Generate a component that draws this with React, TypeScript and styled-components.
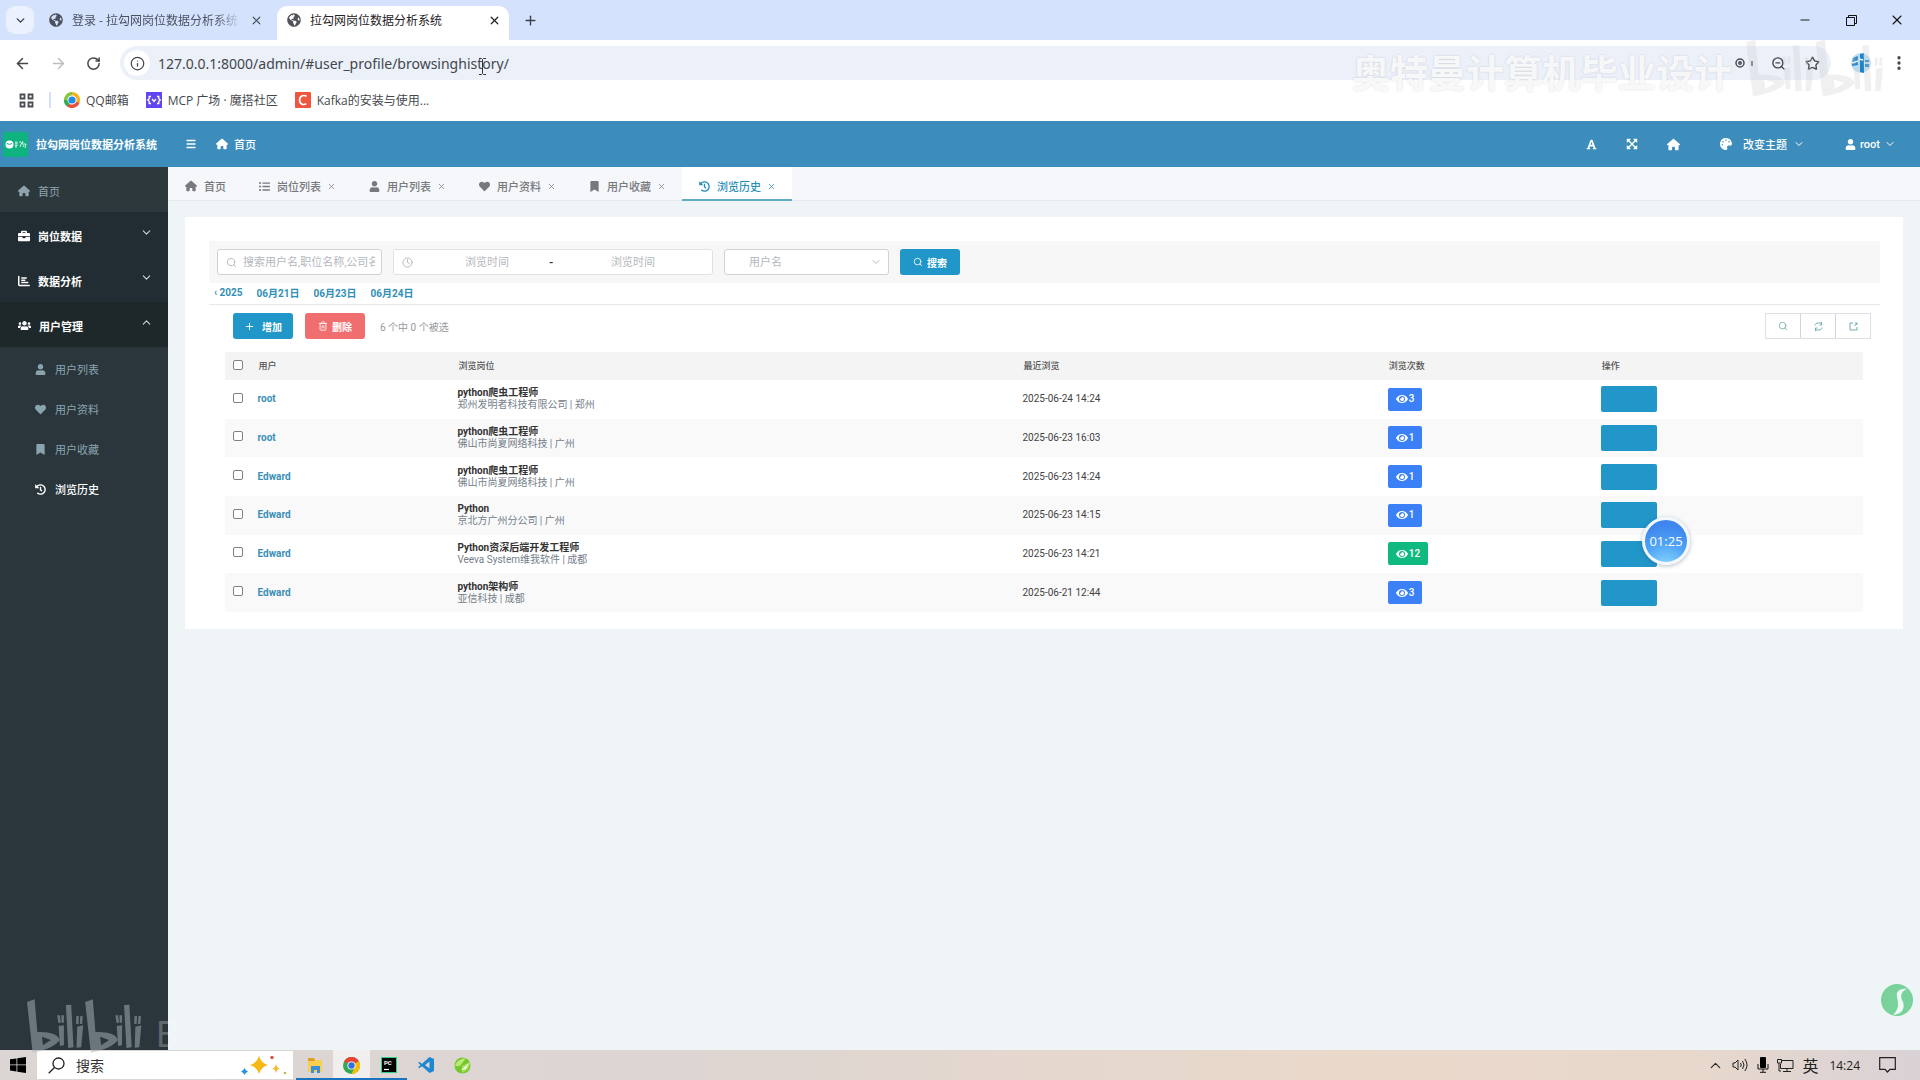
import React from 'react';
import styled, { createGlobalStyle } from 'styled-components';
import {
  FaBookmark, FaBriefcase, FaEye, FaExpandArrowsAlt, FaFont, FaGlobeAmericas,
  FaHeart, FaHistory, FaListUl, FaPalette, FaUser, FaUsers,
} from 'react-icons/fa';
import { FaChartBar, FaHouse } from 'react-icons/fa6';
import {
  ArrowLeft, ArrowRight, ChevronDown, ChevronUp, Clock, Info, Menu, Minus, MoreVertical,
  Plus, RotateCw, Search, Star, Trash2, X, ZoomOut,
} from 'lucide-react';

const Global = createGlobalStyle`
  *, *::before, *::after { box-sizing: border-box; }
  body { margin: 0; overflow: hidden; }
  button, input, select { font: inherit; color: inherit; margin: 0; }
  button { border: 0; padding: 0; background: none; display: inline-flex; align-items: center; justify-content: center; }
  a { color: inherit; text-decoration: none; }
  svg { flex: none; }
`;

const uiFont = '"Open Sans", "Noto Sans CJK SC", sans-serif';
const appFont = 'Roboto, "Noto Sans CJK SC", sans-serif';

const Screen = styled.div`
  position: relative;
  display: flex;
  flex-direction: column;
  height: 100vh;
  background: #eff4f6;
  font-family: ${appFont};
  font-size: 11px;
`;

/* ---------- browser window ---------- */
const TabStrip = styled.header`
  display: flex;
  align-items: flex-end;
  height: 40px;
  padding: 0 0 0 6px;
  background: #d5e2fe;
  color: #3c4249;
  font: 12px ${uiFont};
`;
const TabSearch = styled.button`
  width: 28px;
  height: 28px;
  margin-bottom: 6px;
  border-radius: 9px;
  background: #ebf1ff;
`;
const BrowserTab = styled.div<{ $active?: boolean }>`
  display: flex;
  align-items: center;
  gap: 9px;
  width: ${p => (p.$active ? 232 : 243)}px;
  height: 34px;
  padding: ${p => (p.$active ? '0 8px 6px 10px' : '0 14px 6px 15px')};
  border-radius: 10px 10px 0 0;
  background: ${p => (p.$active ? '#fff' : 'transparent')};
  color: ${p => (p.$active ? '#1f2226' : '#4a5260')};
`;
const BrowserTitle = styled.span<{ $fade?: boolean }>`
  flex: 1;
  overflow: hidden;
  white-space: nowrap;
  mask-image: ${p => (p.$fade ? 'linear-gradient(90deg, #000 85%, transparent)' : 'none')};
`;
const NewTab = styled.button`
  width: 28px;
  height: 28px;
  margin: 0 0 6px 7px;
`;
const WindowControls = styled.div`
  display: flex;
  align-self: stretch;
  margin-left: auto;
  color: #111;
  button { width: 46px; height: 40px; }
`;
const Toolbar = styled.div`
  display: flex;
  align-items: center;
  height: 46px;
  padding: 0 12px 0 14px;
  gap: 19px;
  background: #fff;
  color: #44484d;
`;
const AddressBar = styled.label`
  display: flex;
  align-items: center;
  flex: 1;
  height: 34px;
  padding: 0 6px 0 4px;
  margin-right: 1px;
  gap: 8px;
  border-radius: 17px;
  background: #ebf0f9;
  input {
    flex: 1;
    min-width: 0;
    padding: 0;
    border: 0;
    outline: 0;
    background: none;
    font: 14px "Noto Sans", sans-serif;
    color: #43474d;
  }
  button { width: 26px; }
`;
const InfoBubble = styled.span`
  display: flex;
  align-items: center;
  justify-content: center;
  width: 26px;
  height: 26px;
  border-radius: 50%;
  background: #fff;
`;
const Bookmarks = styled.nav`
  display: flex;
  align-items: center;
  height: 35px;
  padding: 0 0 7px 19px;
  gap: 17px;
  background: #fff;
  color: #45494e;
  font: 12px ${uiFont};
  a { display: flex; align-items: center; gap: 6px; }
`;
const Divider = styled.i`
  width: 2px;
  height: 16px;
  margin-left: -2px;
  margin-right: -4px;
  background: #d3e0fb;
`;

/* ---------- admin header ---------- */
const AdminHeader = styled.header`
  display: flex;
  align-items: center;
  height: 46px;
  background: #3c8dbc;
  color: #fff;
  font-weight: 500;
`;
const Brand = styled.a`
  display: flex;
  align-items: center;
  gap: 8px;
  width: 168px;
  padding-left: 3px;
  font-weight: 700;
`;
const HeaderLeft = styled.div`
  display: flex;
  align-items: center;
  gap: 19px;
  padding-left: 17px;
  a { display: flex; align-items: center; gap: 6px; }
`;
const HeaderRight = styled.div`
  display: flex;
  align-items: center;
  margin-left: auto;
  padding-right: 24px;
  gap: 40px;
`;
const HeaderIcons = styled.div`
  display: flex;
  gap: 29px;
`;
const HeaderButton = styled.button`
  gap: 4px;
`;
const ThemeLabel = styled.span`
  margin: 0 2px 0 7px;
`;

/* ---------- body ---------- */
const Body = styled.div`
  display: flex;
  flex: 1;
  min-height: 0;
`;
const Sidebar = styled.nav`
  width: 168px;
  background: #2a363c;
`;
const tones = { home: '#2d383d', group: '#222d33', open: '#1e282b' };
const MenuItem = styled.button<{ $tone: keyof typeof tones }>`
  display: flex;
  justify-content: flex-start;
  gap: 8px;
  width: 100%;
  height: 45px;
  padding: 2px 15px 0 18px;
  background: ${p => tones[p.$tone]};
  color: ${p => (p.$tone === 'home' ? '#8fa5ad' : '#fff')};
  font-weight: ${p => (p.$tone === 'home' ? 400 : 700)};
  svg:nth-of-type(2) { margin-left: auto; margin-bottom: 6px; color: #cfd6d9; }
`;
const SubMenu = styled.ul`
  margin: 0;
  padding: 2px 0 0;
  list-style: none;
`;
const SubLink = styled.a<{ $active?: boolean }>`
  display: flex;
  align-items: center;
  gap: 9px;
  height: 40px;
  padding-left: 35px;
  color: ${p => (p.$active ? '#fff' : '#8aa4af')};
  font-weight: ${p => (p.$active ? 500 : 400)};
`;
const Content = styled.main`
  flex: 1;
  min-width: 0;
`;
const PageTabs = styled.div`
  display: flex;
  height: 34px;
  background: #f5f7fa;
  border-bottom: 1px solid #e6eaee;
  color: #77797d;
`;
const PageTab = styled.div<{ $active?: boolean }>`
  display: flex;
  align-items: center;
  gap: 6px;
  height: 34px;
  padding: 4px 16px 0 17px;
  font-weight: 500;
  background: ${p => (p.$active ? '#fff' : 'transparent')};
  color: ${p => (p.$active ? '#2a8fb8' : 'inherit')};
  box-shadow: ${p => (p.$active ? 'inset 0 -2px #62abc4' : 'none')};
  button { gap: 7px; }
`;
const Card = styled.section`
  margin: 16px 17px 0;
  padding: 24px 23px 17px 24px;
  background: #fff;
`;
const Filters = styled.form`
  display: flex;
  align-items: center;
  gap: 11px;
  height: 42px;
  padding: 0 8px;
  background: #f7f7f7;
  color: #b4b7bd;
`;
const Field = styled.label<{ $width: number; $indent?: number }>`
  display: flex;
  align-items: center;
  gap: 6px;
  width: ${p => p.$width}px;
  height: 26px;
  padding: 0 6px 0 ${p => p.$indent ?? 8}px;
  border: 1px solid #cfd2d6;
  border-radius: 3px;
  background: #fff;
  input, select {
    flex: 1;
    min-width: 0;
    padding: 0;
    border: 0;
    outline: 0;
    background: none;
    appearance: none;
  }
  input::placeholder { color: #b4b7bd; opacity: 1; }
`;
const DateRange = styled(Field)`
  gap: 0;
  border-color: #dfe2e6;
  svg { margin-right: 12px; }
  input { flex: 0 1 124px; text-align: center; }
  b { width: 22px; color: #333; }
`;
const colors = { primary: '#2196c8', danger: '#f06e6e' };
const Button = styled.button<{ $tone: keyof typeof colors; $gap: number }>`
  gap: ${p => p.$gap}px;
  min-width: 60px;
  height: 26px;
  border-radius: 3px;
  background: ${p => colors[p.$tone]};
  color: #fff;
  font-size: 10px;
  font-weight: 700;
`;
const DateNav = styled.nav`
  display: flex;
  align-items: center;
  gap: 14px;
  height: 22px;
  padding: 0 0 3px 5px;
  border-bottom: 1px solid #e8e8e8;
  color: #2f8fb5;
  font-size: 10px;
  font-weight: 700;
`;
const Actions = styled.div`
  display: flex;
  align-items: center;
  height: 47px;
  padding: 0 9px 5px 24px;
  gap: 12px;
  color: #96999d;
  font-size: 10px;
`;
const Summary = styled.span`
  margin-left: 3px;
`;
const ToolGroup = styled.div`
  display: flex;
  margin-left: auto;
  border: 1px solid #dcdfe6;
  color: #74adaf;
  button { width: 34px; height: 24px; }
  button + button { width: 35px; border-left: 1px solid #cfd6da; }
`;
const TableWrap = styled.div`
  padding: 0 17px 0 16px;
`;
const Table = styled.table`
  width: 100%;
  height: 260px;
  border-collapse: collapse;
  table-layout: fixed;
  font-size: 10px;
  line-height: 12px;
  color: #3f4245;
  th, td { padding: 0 0 0 8px; text-align: left; }
  thead tr { height: 28px; background: #f4f4f4; }
  th { padding-left: 9px; font-size: 9px; font-weight: 500; color: #555; }
  th:first-child, td:first-child { padding-left: 8px; }
  tbody tr:nth-child(even) { background: #f9f9f9; }
  input {
    display: block;
    appearance: none;
    width: 10px;
    height: 10px;
    margin: 0 0 3px;
    border: 1px solid #808080;
    border-radius: 2px;
    background: #fff;
  }
`;
const UserLink = styled.a`
  color: #3a8fb7;
  font-weight: 700;
`;
const Job = styled.strong`
  display: block;
  color: #333;
`;
const Company = styled.span`
  display: block;
  color: #75808a;
`;
const Badge = styled.span<{ $hot: boolean }>`
  display: inline-flex;
  align-items: center;
  gap: 1px;
  height: 23px;
  padding: 0 8px;
  border-radius: 2px;
  background: ${p => (p.$hot ? '#10b97f' : '#3b80f6')};
  color: #fff;
  font-weight: 500;
  vertical-align: middle;
`;
const RowAction = styled.button`
  width: 56px;
  height: 26px;
  border-radius: 2px;
  background: ${colors.primary};
  vertical-align: middle;
`;

/* ---------- taskbar ---------- */
const Taskbar = styled.footer`
  display: flex;
  align-items: stretch;
  height: 30px;
  background: linear-gradient(90deg, #dbd6d4 0%, #ddd5d2 35%, #ead9cb 70%, #e8d8cc 88%, #d9d2d6 100%);
  color: #222;
  font: 12px ${uiFont};
`;
const StartButton = styled.button`
  width: 37px;
  padding-right: 2px;
`;
const TaskSearch = styled.label`
  display: flex;
  align-items: center;
  gap: 11px;
  width: 256px;
  margin: 1px 3px 1px 0;
  padding: 0 6px 0 11px;
  background: #fff;
  input {
    flex: 1;
    min-width: 0;
    border: 0;
    padding: 0;
    background: none;
    font-size: 14px;
  }
  input::placeholder { color: #333; opacity: 1; }
`;
const Task = styled.button<{ $open?: boolean; $front?: boolean }>`
  width: 37px;
  background: ${p => (p.$front ? '#f1efee' : 'transparent')};
  box-shadow: ${p => (p.$open ? 'inset 0 -2px #1b74bd' : 'none')};
`;
const Tray = styled.div`
  display: flex;
  align-items: center;
  gap: 8px;
  margin-left: auto;
  padding-right: 24px;
`;
const Language = styled.span`
  font-size: 16px;
`;
const Clocktime = styled.time`
  margin: 0 11px 0 3px;
`;

/* ---------- floating layers ---------- */
const Floating = styled.div<{ $top?: number; $bottom?: number; $left?: number; $right?: number }>`
  position: absolute;
  top: ${p => (p.$top === undefined ? 'auto' : p.$top + 'px')};
  bottom: ${p => (p.$bottom === undefined ? 'auto' : p.$bottom + 'px')};
  left: ${p => (p.$left === undefined ? 'auto' : p.$left + 'px')};
  right: ${p => (p.$right === undefined ? 'auto' : p.$right + 'px')};
  display: flex;
  pointer-events: none;
`;
const Watermark = styled.span`
  font-size: 38px;
  line-height: 40px;
  font-weight: 700;
  white-space: nowrap;
  color: rgba(255, 255, 255, 0.85);
  text-shadow: 0 0 2px rgba(120, 120, 120, 0.3);
`;
const Stamp = styled.span`
  font-size: 36px;
  line-height: 36px;
  color: rgba(255, 255, 255, 0.25);
`;
const Timer = styled.div`
  display: flex;
  align-items: center;
  justify-content: center;
  width: 48px;
  height: 48px;
  border: 3px solid #f3f8fd;
  border-radius: 50%;
  background: radial-gradient(circle at 50% 115%, #8fdcff 0%, #51a6f5 45%, #3f87ee 80%);
  box-shadow: 0 1px 4px rgba(60, 80, 110, 0.4);
  color: #fff;
  font: 13px ${uiFont};
`;

const Bili = ({ w, h, color }: { w: number; h: number; color: string }) => {
  const half = 'M81 36L104 28L112 126Q172 124 179 150Q162 176 98 188ZM126 140L129 166L153 150ZM172 76h8l3 22h-8zM184 76h8v22h-7zM176 108l16-2v60l-12 2zM198 45l16-1 7 128-16 2zM229 79l8-1-1 24h-7zM241 79l8-1-2 24h-7zM232 110l18-4-6 66-14 1z';
  return (
    <svg width={w} height={h} viewBox="78 24 352 168" preserveAspectRatio="none" fill={color} fillRule="evenodd" aria-hidden="true">
      <path d={half} />
      <path d={half} transform="translate(175 0)" />
    </svg>
  );
};

const QQIcon = () => (
  <svg width="16" height="16" viewBox="0 0 16 16">
    <path d="M8 0A8 8 0 0 0 2 13.300L4.500 11A4.700 4.700 0 0 1 8 3.300z" fill="#8bc53f" />
    <path d="M0 8A8 8 0 0 0 4 15l2-3A5 5 0 0 1 3.300 8z" fill="#3aa757" />
    <path d="M8 0a8 8 0 0 1 7.500 11l-3-1.500A5 5 0 0 0 8 3.300z" fill="#f6b21e" />
    <path d="M15.500 11A8 8 0 0 1 3 14.300L5.500 12a5 5 0 0 0 7-2.500z" fill="#e9503a" />
    <circle cx="8" cy="8" r="3.600" fill="#2389e6" />
  </svg>
);
const McpIcon = () => (
  <svg width="16" height="16" viewBox="0 0 16 16" fill="none" stroke="#fff" strokeWidth="1.3">
    <path fill="#6046f0" stroke="none" d="M0 0h16v16H0z" />
    <path d="M5 4.500H3.200v2.200L1.700 8l1.500 1.300v2.200H5M11 4.500h1.800v2.200L14.300 8l-1.500 1.300v2.200H11M6 7l2 2.500L10 7" />
  </svg>
);
const CIcon = () => (
  <svg width="16" height="16" viewBox="0 0 16 16">
    <rect width="16" height="16" rx="1" fill="#f0563f" />
    <path d="M11.500 4.500C9.500 2.700 4.800 3.300 4.600 8c0 4.700 4.400 5.300 6.700 3.600" fill="none" stroke="#fff" strokeWidth="1.7" />
  </svg>
);
const AppsIcon = () => (
  <svg width="15" height="15" viewBox="0 0 15 15" fill="none" stroke="#4a4d52" strokeWidth="1.8">
    <path d="M1.500 1.500h4v4h-4zM9.500 1.500h4v4h-4zM1.500 9.500h4v4h-4zM9.500 9.500h4v4h-4z" />
  </svg>
);
const BrandLogo = () => (
  <svg width="25" height="25" viewBox="0 0 25 25">
    <rect width="25" height="25" rx="2" fill="#0fb380" />
    <circle cx="6.500" cy="12.500" r="4" fill="#fff" />
    <path d="M4 11.500q2.500 1.800 5 0" fill="none" stroke="#0fb380" />
    <path d="M13 9v7M12 11h3M12 14l3-1M16 10h2M17 15l2-5M20 9l-1 3h4l-1 4M21 13l-1 2" fill="none" stroke="#dff7ee" strokeWidth=".9" />
  </svg>
);
const RestoreIcon = () => (
  <svg width="11" height="11" viewBox="0 0 11 11" fill="none" stroke="#111">
    <path d="M.5 2.500h8v8h-8zM2.500 2.500v-2h8v8h-2" />
  </svg>
);
const AvatarIcon = () => (
  <svg width="20" height="20" viewBox="0 0 20 20">
    <circle cx="10" cy="10" r="10" fill="#b9dcf3" />
    <path d="M2 5l5-2v9l-6 1zM9 1l4-1v20l-4-1zM14 7h4v7h-4z" fill="#1d84c9" />
    <path d="M1 10l6-2M8 6l4 1M13 10h6" stroke="#e8f6ff" strokeWidth="1.500" />
  </svg>
);
const RefreshSmall = () => (
  <svg width="9" height="9" viewBox="0 0 9 9" fill="none" stroke="currentColor">
    <path d="M1 3.500C1 1.500 2.500 1 4.500 1H7M8 5.500C8 7.500 6.500 8 4.500 8H2M7.500 0v3h-2M1.500 9V6h2" />
  </svg>
);
const ExportSmall = () => (
  <svg width="9" height="9" viewBox="0 0 9 9" fill="none" stroke="currentColor">
    <path d="M4 1H1v7h7V5M6 1h2v2M8 1L5.500 4" />
  </svg>
);
const WindowsLogo = () => (
  <svg width="16" height="16" viewBox="0 0 16 16">
    <path d="M0 2.300L6.500 1.400v6.100H0zM7.300 1.300L16 0v7.500H7.300zM0 8.300h6.500v6.200L0 13.600zM7.300 8.300H16V16l-8.700-1.300z" />
  </svg>
);
const Sparkles = () => (
  <svg width="46" height="20" viewBox="0 0 46 20">
    <path d="M18 1q2 7 9 9-7 2-9 9-2-7-9-9 7-2 9-9z" fill="#f7b816" />
    <path d="M35 9q1 4 4 4.500-3 .5-4 4.500-1-4-4-4.500 3-.5 4-4.500z" fill="#f2bd3e" />
    <path d="M3.500 13q.8 2.500 3.500 3.500-2.700 1-3.500 3.500-.8-2.500-3.500-3.500 2.700-1 3.500-3.500z" fill="#2a93de" />
    <circle cx="31" cy="2.500" r="1.700" fill="#d4533d" />
    <circle cx="44" cy="18" r="1.300" fill="#b4bd50" />
  </svg>
);
const FolderIcon = () => (
  <svg width="16" height="16" viewBox="0 0 16 16">
    <path d="M1 1h6l1 2h7v12H1z" fill="#f9cf52" />
    <path d="M1 1h6l1 3H1z" fill="#dda022" />
    <path d="M4 16v-7h9v7h-3v-3H7v3z" fill="#3b8fd6" />
  </svg>
);
const ChromeIcon = () => (
  <svg width="17" height="17" viewBox="0 0 18 18">
    <circle cx="9" cy="9" r="9" fill="#34a853" />
    <path d="M9 9L1.200 4.500A9 9 0 0 1 16.800 4.500z" fill="#ea4335" />
    <path d="M9 9l7.800-4.500A9 9 0 0 1 9 18l3-6z" fill="#fbbc04" />
    <circle cx="9" cy="9" r="4.300" fill="#fff" />
    <circle cx="9" cy="9" r="3.400" fill="#3472e4" />
  </svg>
);
const PyCharmIcon = () => (
  <svg width="16" height="16" viewBox="0 0 16 16">
    <rect x=".5" y=".5" width="15" height="15" fill="#050505" stroke="#2fce8c" />
    <text x="3" y="8" fontSize="6" fontWeight="700" fill="#fff" fontFamily="Roboto, sans-serif">PC</text>
    <path d="M3 12.500h5" stroke="#fff" strokeWidth="1.200" />
  </svg>
);
const CodeIcon = () => (
  <svg width="16" height="16" viewBox="0 0 16 16">
    <path d="M11.500 0L16 2v12l-4.500 2L4 9.200 1.500 11 0 10.200 2.500 8 0 5.800 1.500 5 4 6.800zM11.500 4.500L7 8l4.500 3.500z" fill="#1f86d2" fillRule="evenodd" />
  </svg>
);
const LeafIcon = () => (
  <svg width="17" height="17" viewBox="0 0 17 17">
    <circle cx="8.500" cy="8.500" r="8" fill="#76c72e" />
    <path d="M1 9Q3 2 12 1L6 9z" fill="#b9ea74" />
    <path d="M8 9l8-4q0 8-8 11z" fill="#a5e05c" />
    <path d="M7 13l8-7-3 6z" fill="#f3fbe5" />
  </svg>
);
const SpeakerIcon = () => (
  <svg width="17" height="14" viewBox="0 0 17 14" fill="none" stroke="#222">
    <path d="M1 5h2l3-3v10L3 9H1zM8.500 5q1.500 2 0 4M10.500 3q3 4 0 8M12.800 1q4.500 6 0 12" />
  </svg>
);
const MicIcon = () => (
  <svg width="12" height="16" viewBox="0 0 12 16">
    <rect x="3" y="0" width="6" height="11" rx="1" />
    <path d="M1 7v5h10V7M6 12v3M3 15.300h6" fill="none" stroke="#111" />
  </svg>
);
const NetworkIcon = () => (
  <svg width="17" height="15" viewBox="0 0 17 15" fill="none" stroke="#222">
    <path d="M5 2.500h11v8H3.500V6M.5 1.500h4V5h-4zM2 5v8h2M10 10.500v3M6 13.500h8" />
  </svg>
);
const NoticeIcon = () => (
  <svg width="17" height="16" viewBox="0 0 17 16" fill="none" stroke="#222" strokeWidth="1.200">
    <path d="M.7.7h15.600v11.600H11L8.500 15 6 12.300H.7z" />
  </svg>
);

const pageTabs = [
  { name: '岗位列表', icon: <FaListUl size={11} /> },
  { name: '用户列表', icon: <FaUser size={11} /> },
  { name: '用户资料', icon: <FaHeart size={11} /> },
  { name: '用户收藏', icon: <FaBookmark size={11} /> },
  { name: '浏览历史', icon: <FaHistory size={11} />, active: true },
];
const subLinks = [
  { name: '用户列表', icon: <FaUser size={11} /> },
  { name: '用户资料', icon: <FaHeart size={11} /> },
  { name: '用户收藏', icon: <FaBookmark size={11} /> },
  { name: '浏览历史', icon: <FaHistory size={11} />, active: true },
];
const rows = [
  ['root', 'python爬虫工程师', '郑州发明者科技有限公司 | 郑州', '2025-06-24 14:24', 3],
  ['root', 'python爬虫工程师', '佛山市尚夏网络科技 | 广州', '2025-06-23 16:03', 1],
  ['Edward', 'python爬虫工程师', '佛山市尚夏网络科技 | 广州', '2025-06-23 14:24', 1],
  ['Edward', 'Python', '京北方广州分公司 | 广州', '2025-06-23 14:15', 1],
  ['Edward', 'Python资深后端开发工程师', 'Veeva System维我软件 | 成都', '2025-06-23 14:21', 12],
  ['Edward', 'python架构师', '亚信科技 | 成都', '2025-06-21 12:44', 3],
] as [string, string, string, string, number][];

export default function App() {
  return (
    <Screen>
      <Global />
      <TabStrip>
        <TabSearch aria-label="搜索标签页"><ChevronDown size={13} strokeWidth={2.6} /></TabSearch>
        <BrowserTab>
          <FaGlobeAmericas size={14} />
          <BrowserTitle $fade>登录 - 拉勾网岗位数据分析系统</BrowserTitle>
          <button aria-label="关闭标签页"><X size={13} strokeWidth={2.2} /></button>
        </BrowserTab>
        <BrowserTab $active>
          <FaGlobeAmericas size={14} color="#50555b" />
          <BrowserTitle>拉勾网岗位数据分析系统</BrowserTitle>
          <button aria-label="关闭标签页"><X size={13} strokeWidth={2.4} /></button>
        </BrowserTab>
        <NewTab aria-label="新标签页"><Plus size={15} strokeWidth={2.2} /></NewTab>
        <WindowControls>
          <button aria-label="最小化"><Minus size={14} strokeWidth={1.6} /></button>
          <button aria-label="还原"><RestoreIcon /></button>
          <button aria-label="关闭"><X size={16} strokeWidth={1.6} /></button>
        </WindowControls>
      </TabStrip>
      <Toolbar>
        <button aria-label="后退"><ArrowLeft size={17} strokeWidth={2.2} /></button>
        <button aria-label="前进"><ArrowRight size={17} color="#b9bcc0" /></button>
        <button aria-label="刷新"><RotateCw size={15} strokeWidth={2.4} /></button>
        <AddressBar>
          <InfoBubble><Info size={15} /></InfoBubble>
          <input aria-label="地址" readOnly value="127.0.0.1:8000/admin/#user_profile/browsinghistory/" />
          <button aria-label="密码">
            <svg width="18" height="12" viewBox="0 0 18 12" fill="none" stroke="#4a4d52" strokeWidth="1.500">
              <circle cx="5" cy="6" r="4" /><circle cx="5" cy="6" r="1.200" /><path d="M17 4v5" />
            </svg>
          </button>
          <button aria-label="缩放"><ZoomOut size={15} strokeWidth={2.2} /></button>
          <button aria-label="收藏"><Star size={15} strokeWidth={2.2} /></button>
        </AddressBar>
        <button aria-label="个人资料"><AvatarIcon /></button>
        <button aria-label="菜单"><MoreVertical size={18} strokeWidth={2.4} /></button>
      </Toolbar>
      <Bookmarks>
        <button aria-label="应用"><AppsIcon /></button>
        <Divider />
        <a href="#qq"><QQIcon />QQ邮箱</a>
        <a href="#mcp"><McpIcon />MCP 广场 · 魔搭社区</a>
        <a href="#kafka"><CIcon />Kafka的安装与使用...</a>
      </Bookmarks>

      <AdminHeader>
        <Brand href="#home"><BrandLogo />拉勾网岗位数据分析系统</Brand>
        <HeaderLeft>
          <button aria-label="折叠菜单"><Menu size={12} strokeWidth={2.600} /></button>
          <a href="#home"><FaHouse size={12} />首页</a>
        </HeaderLeft>
        <HeaderRight>
          <HeaderIcons>
            <button aria-label="字体"><FaFont size={11} /></button>
            <button aria-label="全屏"><FaExpandArrowsAlt size={12} /></button>
            <button aria-label="主页"><FaHouse size={13} /></button>
          </HeaderIcons>
          <HeaderButton><FaPalette size={12} /><ThemeLabel>改变主题</ThemeLabel><ChevronDown size={12} /></HeaderButton>
          <HeaderButton><FaUser size={11} />root<ChevronDown size={12} /></HeaderButton>
        </HeaderRight>
      </AdminHeader>

      <Body>
        <Sidebar>
          <MenuItem $tone="home"><FaHouse size={12} />首页</MenuItem>
          <MenuItem $tone="group"><FaBriefcase size={12} />岗位数据<ChevronDown size={13} /></MenuItem>
          <MenuItem $tone="group"><FaChartBar size={12} />数据分析<ChevronDown size={13} /></MenuItem>
          <MenuItem $tone="open"><FaUsers size={13} />用户管理<ChevronUp size={13} /></MenuItem>
          <SubMenu>
            {subLinks.map(l => (
              <li key={l.name}><SubLink href="#" $active={l.active}>{l.icon}{l.name}</SubLink></li>
            ))}
          </SubMenu>
        </Sidebar>
        <Content>
          <PageTabs>
            <PageTab><button><FaHouse size={12} />首页</button></PageTab>
            {pageTabs.map(t => (
              <PageTab key={t.name} $active={t.active}>
                <button>{t.icon}{t.name}</button>
                <button aria-label="关闭"><X size={9} /></button>
              </PageTab>
            ))}
          </PageTabs>
          <Card>
            <Filters onSubmit={e => e.preventDefault()}>
              <Field $width={165}>
                <Search size={11} />
                <input aria-label="搜索" placeholder="搜索用户名,职位名称,公司名称" />
              </Field>
              <DateRange $width={320}>
                <Clock size={11} />
                <input aria-label="开始时间" placeholder="浏览时间" />
                <b>-</b>
                <input aria-label="结束时间" placeholder="浏览时间" />
              </DateRange>
              <Field $width={165} $indent={24}>
                <select aria-label="用户名"><option>用户名</option></select>
                <ChevronDown size={12} />
              </Field>
              <Button $tone="primary" $gap={4}><Search size={10} />搜索</Button>
            </Filters>
            <DateNav>
              <a href="#2025">‹ 2025</a>
              <a href="#0621">06月21日</a>
              <a href="#0623">06月23日</a>
              <a href="#0624">06月24日</a>
            </DateNav>
            <Actions>
              <Button $tone="primary" $gap={7}><Plus size={11} />增加</Button>
              <Button $tone="danger" $gap={4}><Trash2 size={10} />删除</Button>
              <Summary>6 个中 0 个被选</Summary>
              <ToolGroup>
                <button aria-label="搜索"><Search size={10} /></button>
                <button aria-label="刷新"><RefreshSmall /></button>
                <button aria-label="导出"><ExportSmall /></button>
              </ToolGroup>
            </Actions>
            <TableWrap>
              <Table>
                <colgroup>
                  <col style={{ width: '1.5%' }} />
                  <col style={{ width: '12.2%' }} />
                  <col style={{ width: '34.5%' }} />
                  <col style={{ width: '22.3%' }} />
                  <col style={{ width: '13%' }} />
                  <col />
                </colgroup>
                <thead>
                  <tr>
                    <th><input type="checkbox" aria-label="全选" /></th>
                    <th>用户</th><th>浏览岗位</th><th>最近浏览</th><th>浏览次数</th><th>操作</th>
                  </tr>
                </thead>
                <tbody>
                  {rows.map(([user, job, company, time, count], i) => (
                    <tr key={i}>
                      <td><input type="checkbox" aria-label={user} /></td>
                      <td><UserLink href="#">{user}</UserLink></td>
                      <td><Job>{job}</Job><Company>{company}</Company></td>
                      <td>{time}</td>
                      <td><Badge $hot={count > 10}><FaEye size={12} />{count}</Badge></td>
                      <td><RowAction aria-label="操作" /></td>
                    </tr>
                  ))}
                </tbody>
              </Table>
            </TableWrap>
          </Card>
        </Content>
      </Body>

      <Taskbar>
        <StartButton aria-label="开始"><WindowsLogo /></StartButton>
        <TaskSearch>
          <svg width="17" height="17" viewBox="0 0 17 17" fill="none" stroke="#222" strokeWidth="1.300">
            <circle cx="10.500" cy="6.500" r="5.500" /><path d="M6.500 10.500L.7 16.300" />
          </svg>
          <input aria-label="搜索" placeholder="搜索" />
          <Sparkles />
        </TaskSearch>
        <Task $open aria-label="资源管理器"><FolderIcon /></Task>
        <Task $open $front aria-label="Chrome"><ChromeIcon /></Task>
        <Task $open aria-label="PyCharm"><PyCharmIcon /></Task>
        <Task aria-label="VS Code"><CodeIcon /></Task>
        <Task aria-label="浏览器"><LeafIcon /></Task>
        <Tray>
          <ChevronUp size={17} strokeWidth={1.500} />
          <SpeakerIcon />
          <MicIcon />
          <NetworkIcon />
          <Language>英</Language>
          <Clocktime>14:24</Clocktime>
          <NoticeIcon />
        </Tray>
      </Taskbar>

      <Floating $top={54} $right={188}><Watermark>奥特曼计算机毕业设计</Watermark></Floating>
      <Floating $top={38} $right={35}><Bili w={140} h={60} color="rgba(205,205,205,.3)" /></Floating>
      <Floating $bottom={26} $left={26}><Bili w={117} h={56} color="rgba(170,182,188,.5)" /></Floating>
      <Floating $bottom={27} $left={156}><Stamp>B</Stamp></Floating>
      <Floating $top={58} $left={478}>
        <svg width="9" height="17" viewBox="0 0 9 17" fill="none" stroke="#333">
          <path d="M1 .5h2.500l1 1 1-1H8M4.500 1.500v14M1 16.500h2.500l1-1 1 1H8" />
        </svg>
      </Floating>
      <Floating $top={517} $right={230}><Timer>01:25</Timer></Floating>
      <Floating $bottom={64} $right={7}>
        <svg width="32" height="32" viewBox="0 0 32 32">
          <circle cx="16" cy="16" r="16" fill="#79d29b" />
          <path d="M26 5C18 4 15 8 16 13c1 6 3 11-4 18 10-1 13-8 9-15-2-5 0-9 5-11z" fill="#effaf4" />
        </svg>
      </Floating>
    </Screen>
  );
}
